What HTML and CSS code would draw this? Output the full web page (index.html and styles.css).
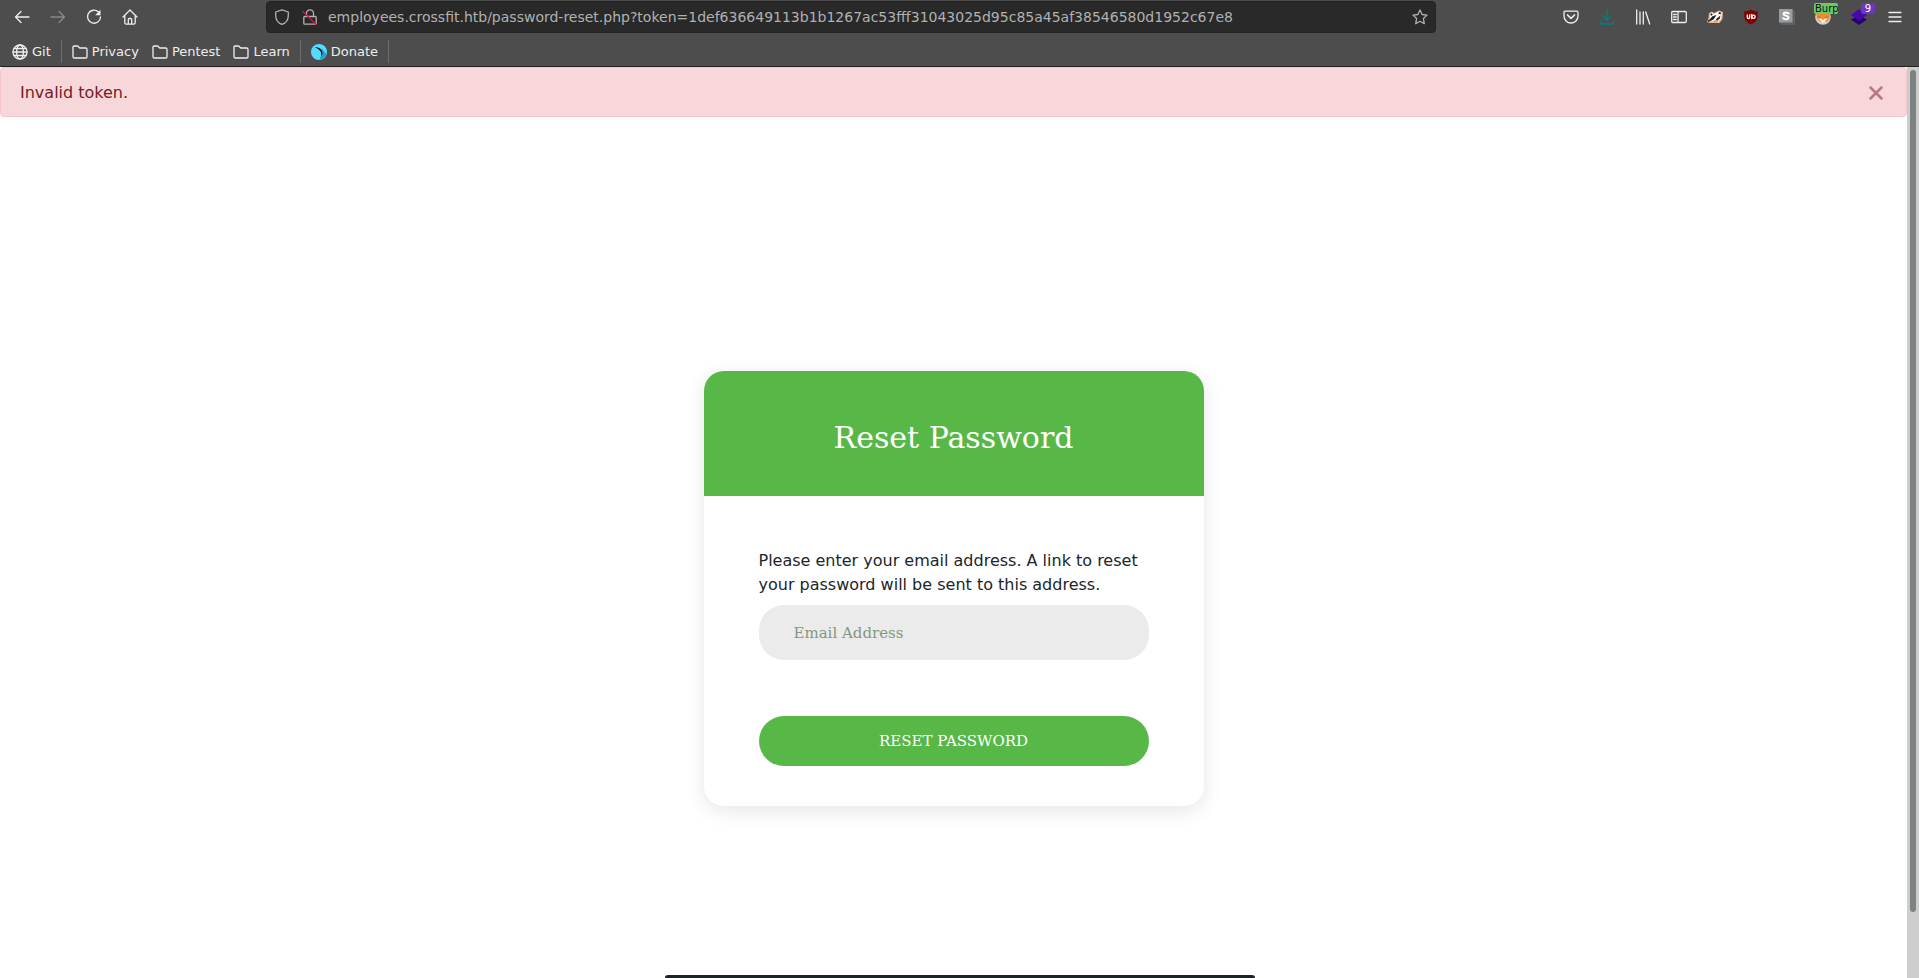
FILE: index.html
```html
<!DOCTYPE html>
<html lang="en">
<head>
<meta charset="utf-8">
<title>Reset Password</title>
<link rel="stylesheet" href="styles.css">
</head>
<body>
<header class="chrome">
  <div class="toolbar">
    <nav class="nav-buttons" aria-label="Navigation">
      <button class="icon-btn" aria-label="Back"><svg viewBox="0 0 16 16"><path d="M15 8H1.500M7 2.500L1.500 8l5.500 5.500"/></svg></button>
      <button class="icon-btn dim" aria-label="Forward"><svg viewBox="0 0 16 16"><path d="M1 8h13.500M9 2.500L14.500 8 9 13.500"/></svg></button>
      <button class="icon-btn" aria-label="Reload"><svg viewBox="0 0 16 16"><path d="M12.500 3A6.500 6.500 0 1 0 14.500 8"/><path d="M14.500 .8v5.400H9.200z" fill="currentColor" stroke="none"/></svg></button>
      <button class="icon-btn" aria-label="Home"><svg viewBox="0 0 16 16"><path d="M1 8l7-7 7 7M2.800 6.500v7.300q0 1.400 1.400 1.400h7.600q1.400 0 1.400-1.400V6.500M6.300 15v-4.500q0-1 1-1h1.400q1 0 1 1V15"/></svg></button>
    </nav>
    <div class="urlbar">
      <svg class="glyph" viewBox="0 0 16 16"><path d="M8 .8L14.300 3v3.500C14.300 10.500 12 14 8 15.300 4 14 1.700 10.500 1.700 6.500V3z"/></svg>
      <svg class="glyph lock" viewBox="0 0 16 16"><path d="M4.500 7.500V4.300a3.500 3.500 0 0 1 7 0V7.500M2.800 7.500h10.400q1 0 1 1v5.700q0 1-1 1H2.800q-1 0-1-1V8.500q0-1 1-1z"/><path class="slash" d="M1 2.500l13 13"/></svg>
      <input class="url" type="text" aria-label="Address" value="employees.crossfit.htb/password-reset.php?token=1def636649113b1b1267ac53fff31043025d95c85a45af38546580d1952c67e8">
      <button class="star" aria-label="Bookmark"><svg viewBox="0 0 16 16"><path d="M8 1l2.100 4.500 4.900.6-3.600 3.400.9 5.200L8 12.300l-4.300 2.400.9-5.200L1 6.100l4.900-.6z"/></svg></button>
    </div>
    <div class="extensions">
      <button class="icon-btn" aria-label="Pocket"><svg viewBox="0 0 16 16"><path d="M2.300 2.200h11.400q1.300 0 1.300 1.300V7a7 7 0 0 1-14 0V3.500q0-1.300 1.300-1.300z"/><path d="M4.500 6L8 9.300 11.500 6" stroke-width="1.700"/></svg></button>
      <button class="icon-btn teal" aria-label="Downloads"><svg viewBox="0 0 16 16"><path d="M8 .5v10.300M4 7l4 4 4-4M1.300 11.800v2q0 1.200 1.200 1.200h11q1.200 0 1.200-1.200v-2"/></svg></button>
      <button class="icon-btn" aria-label="Library"><svg viewBox="0 0 16 16"><path d="M1.700 1v14M5 3v12M8.300 3v12M10.700 3l4 12"/></svg></button>
      <button class="icon-btn" aria-label="Sidebars"><svg viewBox="0 0 16 16"><path d="M2 2.500h12q1.300 0 1.300 1.300v8.400q0 1.300-1.300 1.300H2Q.7 13.500.7 12.200V3.800Q.7 2.500 2 2.500zM7 2.500v11M2.500 5.500h2.700M2.500 8h2.700M2.500 10.500h2.700"/></svg></button>
      <button class="icon-btn" aria-label="Privacy Badger"><svg viewBox="0 0 16 16"><g stroke="none"><path fill="#f3b27a" d="M0 13l1.500-4L2 4l3-1.500L7 4l5-2.500 4 1.500-.5 7-3 4H2z"/><path fill="#fff" d="M1.500 12L3 8.500 2.800 5 5 3.500l2 1.200 5-2.200 2.800 1-.8 6.200-2.500 3z"/><path fill="#222" d="M3.300 5l1.500-.8 1 1L4 7zM12 3l2.300.8-1 1.700-2-1zM2 11l3.500-3.800L9.500 6l-3 4.500L3.500 12zM9 10l4.500-3.500L12.500 10l-3 1.500zM.8 11.200l1.700-.4.3 1.700-1.500.5z"/><path fill="#999" d="M7 11.500l5-.8-1.500 2H6z"/></g></svg></button>
      <button class="icon-btn" aria-label="uBlock Origin"><svg viewBox="0 0 16 16"><path d="M8 .5q3 2 6.700 2v5Q14.700 12.500 8 15.500 1.300 12.500 1.300 7.500v-5Q5 2.500 8 .5z" fill="#800000" stroke="none"/><path d="M4.300 6v2.200q0 1.300 1.200 1.300t1.200-1.300V6M8.700 5.500v4" stroke="#fff"/><circle cx="10.500" cy="7.800" r="1.600" stroke="#fff"/></svg></button>
      <button class="icon-btn" aria-label="Stylus"><svg viewBox="0 0 16 16"><g stroke="none"><path fill="#5c6166" d="M13.500 0L16 2.500V16H2.500L0 13.500z"/><path fill="#9a9da0" d="M0 0h13.500v13.500H0z"/></g><path d="M9.700 4.500Q6.700 2.700 4.900 4 3.800 5.800 6.800 6.600q3.600.9 2.500 2.800-2 1.700-5-.1" stroke="#fff" stroke-width="2"/></svg></button>
      <button class="icon-btn" aria-label="FoxyProxy"><svg viewBox="0 0 16 16"><g stroke="none"><circle cx="8" cy="8" r="7.800" fill="#d8d2c6"/><path fill="#f08a2c" d="M1 3l5 1h4l5-1-.5 7-3 3-3-2-3 2L2 10z"/><path fill="#fff" d="M3 9l4 1 1 2 1-2 4-1-5 5z"/><path fill="#54320f" d="M3.500 7.500l2.500 1H4zM12.500 7.500l-2.500 1h2z"/></g></svg><span class="badge burp">Burp</span></button>
      <button class="icon-btn" aria-label="Wappalyzer"><svg viewBox="0 0 16 16"><g stroke="none"><path fill="#230072" d="M0 10.500l8-4 8 4-8 5.500z"/><path fill="#4608ad" d="M0 6l8-6 8 6-8 5.800z"/></g></svg><span class="badge count">9</span></button>
      <button class="icon-btn" aria-label="Menu"><svg viewBox="0 0 16 16"><path d="M2 3.500h12M2 8h12M2 12.500h12"/></svg></button>
    </div>
  </div>
  <nav class="bookmarks" aria-label="Bookmarks">
    <a class="bookmark" href="#"><svg viewBox="0 0 16 16"><circle cx="8" cy="8" r="7"/><ellipse cx="8" cy="8" rx="3.400" ry="7"/><path d="M1 8h14M2.300 4.500h11.400M2.300 11.500h11.400"/></svg>Git</a>
    <span class="divider"></span>
    <div class="folders">
      <a class="bookmark" href="#"><svg viewBox="0 0 16 16"><path d="M1 12.700V3.300Q1 2 2.300 2h3.400l2 2h6Q15 4 15 5.300v7.400q0 1.300-1.300 1.300H2.300Q1 14 1 12.700z"/></svg>Privacy</a>
      <a class="bookmark" href="#"><svg viewBox="0 0 16 16"><path d="M1 12.700V3.300Q1 2 2.300 2h3.400l2 2h6Q15 4 15 5.300v7.400q0 1.300-1.300 1.300H2.300Q1 14 1 12.700z"/></svg>Pentest</a>
      <a class="bookmark" href="#"><svg viewBox="0 0 16 16"><path d="M1 12.700V3.300Q1 2 2.300 2h3.400l2 2h6Q15 4 15 5.300v7.400q0 1.300-1.300 1.300H2.300Q1 14 1 12.700z"/></svg>Learn</a>
    </div>
    <span class="divider"></span>
    <a class="bookmark" href="#"><svg viewBox="0 0 16 16"><g stroke="none"><circle cx="8" cy="8" r="8" fill="#53dcff"/><path fill="#2a9fc0" d="M11 5l4.500 5Q13 15.500 8.500 16l2-6z"/><path fill="#10181c" d="M3.500 3q5.500 0 7.500 3.500l.5 3-1 3-.5-4Q9 5.500 3.500 3z"/></g></svg>Donate</a>
    <span class="divider"></span>
  </nav>
</header>
<div class="viewport">
  <main class="page">
    <div class="alert" role="alert">
      <span>Invalid token.</span>
      <button class="close" aria-label="Close"><svg viewBox="0 0 14 14"><path d="M1.500 1.500l11 11M12.500 1.500l-11 11"/></svg></button>
    </div>
    <section class="stage">
      <form class="card">
        <h1 class="card-title">Reset Password</h1>
        <div class="card-body">
          <label class="intro" for="email">Please enter your email address. A link to reset your password will be sent to this address.</label>
          <input class="email" id="email" type="email" placeholder="Email Address">
          <button class="submit" type="button">RESET PASSWORD</button>
        </div>
      </form>
    </section>
    <div class="bottom-panel"></div>
  </main>
  <div class="scrollbar"><div class="thumb"></div></div>
</div>
</body>
</html>
```

FILE: styles.css
```css
* { box-sizing: border-box; }

body {
  margin: 0;
  height: 100vh;
  display: flex;
  flex-direction: column;
  overflow: hidden;
  background: #fff;
  font: 16px/24px "DejaVu Sans", sans-serif;
  color: #212529;
}

button {
  padding: 0;
  border: 0;
  background: none;
  color: inherit;
  font: inherit;
}

svg {
  display: block;
  fill: none;
  stroke: currentColor;
  stroke-width: 1.300;
  stroke-linecap: round;
  stroke-linejoin: round;
}

/* Browser chrome */
.chrome {
  background: #4d4d4d;
  border-bottom: 1px solid #222;
  color: #eee;
}

.toolbar {
  display: flex;
  align-items: center;
  height: 34px;
}

.nav-buttons {
  display: flex;
  gap: 20px;
  width: 266px;
  padding-left: 14px;
}

.icon-btn {
  position: relative;
  width: 16px;
  height: 16px;
}

.icon-btn svg,
.star svg { width: 16px; height: 16px; }
.dim { color: #898989; }
.teal { color: #008080; }

.urlbar {
  display: flex;
  align-items: center;
  width: 1170px;
  height: 32px;
  padding: 0 7px;
  border: 1px solid #232323;
  border-radius: 4px;
  background: #292929;
  color: #b1b1b1;
}

.glyph {
  flex: none;
  width: 16px;
  height: 16px;
}

.lock { margin: 0 10px 0 12px; }
.slash { stroke: #e2123f; }

.url {
  flex: 1;
  min-width: 0;
  padding: 0;
  border: 0;
  outline: 0;
  background: none;
  color: inherit;
  font: 14px/20px "DejaVu Sans", sans-serif;
}

.extensions {
  display: flex;
  gap: 20px;
  margin-left: auto;
  padding-right: 16px;
}

.nav-buttons,
.extensions { flex: none; }

.badge {
  position: absolute;
  top: -6px;
  overflow: hidden;
  border-radius: 2px;
  font-size: 10px;
  line-height: 11px;
}

.burp {
  left: -1px;
  width: 24px;
  padding-left: 1px;
  background: #66cc66;
  color: #111;
  white-space: nowrap;
}

.count {
  left: 10px;
  width: 14px;
  background: #6b39bd;
  color: #fff;
  text-align: center;
}

.bookmarks {
  display: flex;
  align-items: center;
  gap: 10px;
  height: 32px;
  padding: 3px 12px 0;
  font-size: 13px;
  line-height: 20px;
}

.folders {
  display: flex;
  gap: 13px;
}

.bookmark {
  display: flex;
  align-items: center;
  gap: 4px;
  color: inherit;
  text-decoration: none;
}

.bookmark svg { width: 16px; height: 16px; }

.divider {
  width: 1px;
  height: 23px;
  background: #6e6e6e;
}

/* Page */
.viewport {
  display: flex;
  flex: 1;
  min-height: 0;
}

.page {
  display: flex;
  flex: 1;
  flex-direction: column;
}

.alert {
  display: flex;
  align-items: center;
  justify-content: space-between;
  height: 50px;
  padding: 2px 23px 0 19px;
  border: 1px solid #f5c6cb;
  border-radius: 4px;
  background: #f8d7da;
  color: #721c24;
}

.close { color: #b5797f; }

.close svg {
  width: 14px;
  height: 14px;
  stroke-width: 2.500;
}

.stage {
  display: flex;
  flex: 1;
  align-items: center;
  justify-content: center;
  padding-top: 85px;
}

.card {
  width: 500px;
  overflow: hidden;
  border-radius: 20px;
  background: #fff;
  box-shadow: 0 5px 20px rgba(0, 0, 0, 0.1);
}

.card-title {
  margin: 0;
  padding: 49px 20px 40px;
  background: #58b847;
  color: #fff;
  font: 30px/36px "DejaVu Serif", serif;
  text-align: center;
}

.card-body {
  display: flex;
  flex-direction: column;
  padding: 53px 55px 40px;
}

.intro { margin-bottom: 8px; }

.email,
.submit {
  width: 100%;
  border: 0;
  border-radius: 25px;
  font: 15px/20px "DejaVu Serif", serif;
}

.email {
  height: 55px;
  margin-bottom: 56px;
  padding: 0 35px;
  background: #ebebeb;
}

.email::placeholder {
  color: #839881;
  opacity: 1;
}

.submit {
  height: 50px;
  background: #58b847;
  color: #fff;
}

.bottom-panel {
  align-self: center;
  width: 590px;
  height: 3px;
  margin-left: 12px;
  border-radius: 8px 8px 0 0;
  background: #1d2426;
}

.scrollbar {
  width: 12px;
  padding: 3px;
  background: #cdcdcd;
}

.thumb {
  width: 6px;
  height: 93%;
  border-radius: 3px;
  background: #7e8382;
}
```
